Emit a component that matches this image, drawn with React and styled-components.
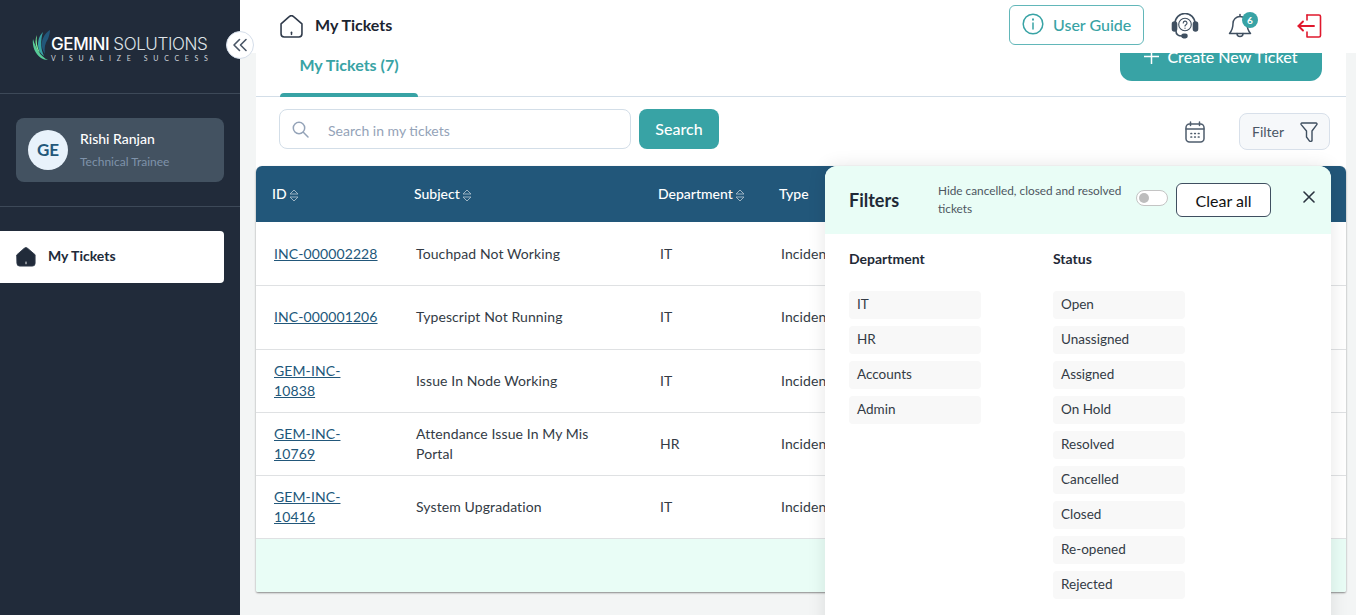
import React from 'react';
import styled, { createGlobalStyle } from 'styled-components';

const GlobalStyle = createGlobalStyle`
  * { box-sizing: border-box; }
  html, body { margin: 0; height: 100%; overflow: hidden; }
  body { font-family: Lato, "Open Sans", sans-serif; color: #1f2a37; }
`;

const Page = styled.div`
  display: flex;
  height: 100vh;
`;

const Sidebar = styled.aside`
  position: relative;
  flex: 0 0 240px;
  background: #212b3a;
  z-index: 3;
`;

const LogoArea = styled.div`
  height: 94px;
  border-bottom: 1px solid #3d4958;
  padding: 29px 0 0 32px;
  display: flex;
  align-items: flex-start;
`;

const LogoText = styled.div`
  margin-left: -1px;
  padding-top: 6px;
  color: #fff;
`;

const LogoName = styled.div`
  font-family: Inter, Lato, sans-serif;
  font-size: 17px;
  line-height: 19px;
  letter-spacing: -0.4px;
  font-weight: 500;
  white-space: nowrap;
  span { font-weight: 300; color: #dfe3e8; }
`;

const LogoTag = styled.div`
  font-size: 7px;
  line-height: 8px;
  letter-spacing: 5.7px;
  color: #cfd5dc;
  white-space: nowrap;
`;

const CollapseButton = styled.button`
  position: absolute;
  top: 31px;
  right: -14px;
  width: 28px;
  height: 28px;
  padding: 0;
  border-radius: 50%;
  border: 1px solid #d5deea;
  background: #fff;
  color: #4a5666;
  display: flex;
  align-items: center;
  justify-content: center;
`;

const ProfileArea = styled.div`
  padding: 24px 16px;
  border-bottom: 1px solid #3d4958;
`;

const ProfileCard = styled.div`
  height: 64px;
  border-radius: 8px;
  background: #435261;
  padding: 0 12px;
  display: flex;
  align-items: center;
  gap: 12px;
`;

const Avatar = styled.div`
  width: 40px;
  height: 40px;
  padding-bottom: 2px;
  border-radius: 50%;
  background: #e8f2fb;
  color: #22577a;
  font-size: 17px;
  font-weight: 700;
  display: flex;
  align-items: center;
  justify-content: center;
`;

const ProfileText = styled.div`
  display: flex;
  flex-direction: column;
  gap: 7px;
  margin-top: -2px;
`;

const ProfileName = styled.div`
  color: #fff;
  font-size: 14px;
  line-height: 17px;
  font-weight: 500;
`;

const ProfileRole = styled.div`
  color: #7f93aa;
  font-size: 12px;
  line-height: 15px;
`;

const NavList = styled.nav`
  padding: 24px 16px 0 0;
`;

const NavItem = styled.a`
  height: 52px;
  background: #fff;
  border-radius: 0 4px 4px 0;
  padding-left: 16px;
  display: flex;
  align-items: center;
  gap: 12px;
  color: #212b3a;
  font-size: 14px;
  font-weight: 700;
  span { margin-top: -3px; }
`;

const Main = styled.div`
  flex: 1;
  min-width: 0;
  display: flex;
  flex-direction: column;
`;

const TopBar = styled.header`
  flex: 0 0 53px;
  background: #fff;
  padding: 0 34px 0 40px;
  display: flex;
  align-items: center;
  position: relative;
  z-index: 2;
`;

const PageTitle = styled.div`
  margin: -4px 0 0 12px;
  font-size: 16px;
  font-weight: 700;
  color: #1b2430;
  flex: 1;
`;

const GuideButton = styled.button`
  width: 135px;
  height: 40px;
  margin-top: -3px;
  border: 1px solid #62b7b9;
  border-radius: 6px;
  background: #fff;
  color: #38a3a5;
  font: 500 16px Lato, sans-serif;
  padding: 0 0 2px 12px;
  display: flex;
  align-items: center;
  gap: 9px;
`;

const IconSlot = styled.div`
  position: relative;
  display: flex;
  margin-left: ${p => p.$gap}px;
  margin-top: -2px;
`;

const Badge = styled.span`
  position: absolute;
  top: -1px;
  right: -6px;
  width: 16px;
  height: 16px;
  border-radius: 50%;
  background: #38a3a5;
  color: #fff;
  font-size: 10px;
  font-weight: 700;
  display: flex;
  align-items: center;
  justify-content: center;
`;

const Body = styled.main`
  flex: 1;
  min-height: 0;
  overflow: hidden;
  background: #f3f5f5;
  padding: 0 10px 0 16px;
`;

const Sheet = styled.div`
  margin-top: -16px;
  background: #fff;
`;

const TabRow = styled.div`
  height: 60px;
  border-bottom: 1px solid #d3dee8;
  padding: 0 24px;
  display: flex;
  justify-content: space-between;
  align-items: flex-start;
`;

const Tab = styled.div`
  align-self: flex-end;
  width: 138px;
  display: flex;
  flex-direction: column;
  margin-bottom: -1px;
  color: #38a3a5;
  font-size: 16px;
  font-weight: 700;
  text-align: center;
`;

const TabBar = styled.div`
  height: 4px;
  margin-top: 19px;
  background: #38a3a5;
  border-radius: 4px 4px 0 0;
`;

const CreateButton = styled.button`
  width: 202px;
  height: 44px;
  border: 0;
  border-radius: 0 0 12px 12px;
  background: #38a3a5;
  color: #fff;
  font: 500 16px Lato, sans-serif;
  padding: 0 0 5px;
  display: flex;
  align-items: center;
  justify-content: center;
  gap: 8px;
`;

const Toolbar = styled.div`
  height: 69px;
  padding: 12px 16px 0 23px;
  display: flex;
  align-items: flex-start;
`;

const SearchBox = styled.div`
  width: 352px;
  height: 40px;
  border: 1px solid #d3dee8;
  border-radius: 8px;
  background: #fff;
  padding-left: 12px;
  display: flex;
  align-items: center;
  gap: 19px;
  color: #94a3b8;
  font-size: 14px;
  span { margin-top: 2px; }
`;

const SearchButton = styled.button`
  width: 80px;
  height: 40px;
  margin-left: 8px;
  border: 0;
  border-radius: 8px;
  background: #38a3a5;
  color: #fff;
  font: 500 16px Lato, sans-serif;
  padding: 0 0 2px;
`;

const CalendarSlot = styled.div`
  margin-left: auto;
  margin-right: 34px;
  padding-top: 12px;
  display: flex;
`;

const FilterButton = styled.button`
  width: 91px;
  height: 37px;
  margin-top: 4px;
  border: 1px solid #d8e0ea;
  border-radius: 8px;
  background: #f6f8fa;
  color: #4a5666;
  font: 400 14px Lato, sans-serif;
  padding: 0 11px 0 12px;
  display: flex;
  align-items: center;
  justify-content: space-between;
`;

const TableWrap = styled.div`
  position: relative;
`;

const Card = styled.div`
  border-radius: 6px 6px 2px 2px;
  overflow: hidden;
  box-shadow: 0 1px 2px rgba(0, 0, 0, 0.45);
`;

const Table = styled.table`
  width: 100%;
  table-layout: fixed;
  border-collapse: collapse;
  background: #fff;
`;

const HeadCell = styled.th`
  height: 56px;
  padding: 0 0 2px 16px;
  background: #22577a;
  color: #fff;
  font-size: 14px;
  font-weight: 500;
  text-align: left;
  white-space: nowrap;
  svg { margin-left: 2px; vertical-align: -3px; }
`;

const Row = styled.tr`
  height: 63px;
  border-bottom: 1px solid #dfe1e3;
  &:nth-child(2) { height: 64px; }
  &:first-child td { padding-top: 2px; }
`;

const Cell = styled.td`
  padding: 0 ${p => p.$right || 8}px 0 18px;
  font-size: 14px;
  line-height: 20px;
  letter-spacing: 0.1px;
  color: #333b45;
  overflow: hidden;
  white-space: ${p => p.$nowrap ? 'nowrap' : 'normal'};
`;

const TicketLink = styled.a`
  color: #22577a;
  text-decoration: underline;
`;

const TableFooter = styled.div`
  height: 53px;
  background: #e9fdf6;
`;

const Panel = styled.aside`
  position: absolute;
  top: 0;
  right: 15px;
  width: 506px;
  height: 500px;
  background: #fff;
  border-radius: 12px 12px 0 0;
  box-shadow: 0 0 18px rgba(0, 0, 0, 0.1);
`;

const PanelHead = styled.div`
  height: 68px;
  background: #e9fdf6;
  border-radius: 12px 12px 0 0;
  padding: 0 16px 0 24px;
  display: flex;
  align-items: center;
`;

const PanelTitle = styled.div`
  width: 89px;
  font-size: 18px;
  font-weight: 700;
  color: #1f2a37;
`;

const HideNote = styled.div`
  width: 198px;
  font-size: 11.8px;
  line-height: 18px;
  color: #4d5661;
`;

const Toggle = styled.div`
  width: 32px;
  height: 16px;
  margin-top: -4px;
  border: 1px solid #c4c4c4;
  border-radius: 8px;
  background: #fff;
  padding: 2px;
  &::before {
    content: '';
    display: block;
    width: 10px;
    height: 10px;
    border-radius: 50%;
    background: #bdbdbd;
  }
`;

const ClearButton = styled.button`
  width: 95px;
  height: 34px;
  margin: 0 0 0 8px;
  border: 1px solid #3f4f60;
  border-radius: 6px;
  background: #fff;
  color: #111;
  font: 400 16px Lato, sans-serif;
`;

const CloseButton = styled.button`
  margin: -6px 0 0 auto;
  padding: 0;
  border: 0;
  background: none;
  color: #2b3440;
  display: flex;
`;

const PanelBody = styled.div`
  padding: 16px 24px;
  display: flex;
`;

const FilterColumn = styled.div`
  width: 204px;
`;

const FilterHeading = styled.div`
  height: 41px;
  font-size: 14px;
  line-height: 18px;
  font-weight: 700;
  color: #1f2a37;
`;

const ChipList = styled.div`
  display: flex;
  flex-direction: column;
  gap: 7px;
`;

const Chip = styled.div`
  width: 132px;
  height: 28px;
  padding-left: 8px;
  border-radius: 4px;
  background: #f8f8f8;
  color: #333b45;
  font-size: 13.5px;
  line-height: 26px;
`;

const LeafIcon = () => (
  <svg width="20" height="32" viewBox="0 0 20 32" fill="none">
    <path d="M18 1C12 5 9 11 10 18c.5 3 2 5 3 7 -1-6 0-11 3-15 1-3 2-6 2-9z" fill="#22577a" />
    <path d="M11 3C6 8 5 15 7 21c1 3 3 5 5 6 -3-6-4-15-1-24z" fill="#38a3a5" />
    <path d="M1 10c-1 7 2 15 8 19 2 1 4 2 7 2 -7-3-12-11-15-21z" fill="#57cc99" />
    <path d="M5 6C3 10 3 15 5 20c1 2 2 3 3 4 -3-6-4-12-3-18z" fill="#80ed99" />
  </svg>
);

const ChevronsIcon = () => (
  <svg width="16" height="16" viewBox="0 0 16 16" fill="none" stroke="currentColor" strokeWidth="1.6" strokeLinecap="round" strokeLinejoin="round">
    <path d="M7.5 2.5 2 8l5.5 5.5" />
    <path d="M14 2.5 8.5 8l5.5 5.5" />
  </svg>
);

const HomeIcon = ({ size, solid }) => (
  <svg width={size} height={size} viewBox="0 0 22 22" fill={solid ? '#212b3a' : 'none'} stroke="#2f3a4a" strokeWidth={solid ? 1 : 1.5} strokeLinejoin="round" strokeLinecap="round">
    <path d="M1 8.5 8.8 1.6a3 3 0 0 1 4.2 0L21 8.5V18a3 3 0 0 1-3 3H4a3 3 0 0 1-3-3z" />
    <path d="M11 16.5v2" stroke={solid ? '#fff' : '#2f3a4a'} />
  </svg>
);

const InfoIcon = () => (
  <svg width="22" height="22" viewBox="0 0 22 22" fill="none" stroke="#38a3a5" strokeWidth="1.5" strokeLinecap="round">
    <circle cx="11" cy="11" r="9.8" />
    <path d="M11 10v6" />
    <path d="M11 6.3v.4" strokeWidth="1.9" />
  </svg>
);

const HeadsetIcon = () => (
  <svg width="28" height="26" viewBox="0 0 28 26" fill="none" stroke="#3f4f60" strokeWidth="1.6" strokeLinecap="round">
    <path d="M4 13V10.5a10 10 0 0 1 20 0V13" />
    <rect x="1.5" y="9" width="4" height="9" rx="2" fill="#3f4f60" />
    <rect x="22.5" y="9" width="4" height="9" rx="2" fill="#3f4f60" />
    <circle cx="14" cy="11.5" r="6.3" strokeWidth="1.1" />
    <path d="M12.2 10a1.9 1.9 0 1 1 2.8 1.7c-.7.4-1 .8-1 1.4" strokeWidth="1.1" />
    <path d="M14 15v.2" strokeWidth="1.2" />
    <path d="M5 18c0 3 2 5 6 5" />
    <rect x="11" y="21.4" width="5" height="3.2" rx="1.6" fill="#3f4f60" />
  </svg>
);

const BellIcon = () => (
  <svg width="24" height="26" viewBox="0 0 24 26" fill="none" stroke="#3f4f60" strokeWidth="1.5" strokeLinecap="round" strokeLinejoin="round">
    <path d="M12 3.5a7 7 0 0 0-7 7c0 5-1 7-3.5 10h21C20 17.5 19 15.5 19 10.5a7 7 0 0 0-7-7z" />
    <path d="M12 1.5v2" />
    <path d="M9 20.5a3 3 0 0 0 6 0" />
  </svg>
);

const LogoutIcon = () => (
  <svg width="25" height="24" viewBox="0 0 25 24" fill="none" stroke="#e0182d" strokeWidth="1.6" strokeLinecap="round" strokeLinejoin="round">
    <path d="M10 1h12a1.5 1.5 0 0 1 1.5 1.5v19A1.5 1.5 0 0 1 22 23H10v-5" />
    <path d="M10 1v5" />
    <path d="M1.5 12H17" strokeWidth="1.9" />
    <path d="M6 7.5 1.5 12 6 16.5" strokeWidth="1.9" />
  </svg>
);

const PlusIcon = () => (
  <svg width="15" height="15" viewBox="0 0 15 15" stroke="#fff" strokeWidth="1.5">
    <path d="M7.5 0v15M0 7.5h15" />
  </svg>
);

const SearchIcon = () => (
  <svg width="17" height="17" viewBox="0 0 17 17" fill="none" stroke="#94a3b8" strokeWidth="1.5" strokeLinecap="round">
    <circle cx="7" cy="7" r="5.7" />
    <path d="m11.3 11.3 4.7 4.7" />
  </svg>
);

const CalendarIcon = () => (
  <svg width="20" height="22" viewBox="0 0 20 22" fill="none" stroke="#4f5d6d" strokeWidth="1.5" strokeLinecap="round">
    <rect x="1" y="3" width="18" height="18" rx="3.5" />
    <path d="M1 8h18M5.5 1v3.5M14.5 1v3.5" />
    <path d="M6 12.5h.6M9.7 12.5h.6M13.4 12.5h.6M6 16h.6M9.7 16h.6M13.4 16h.6" strokeWidth="1.7" />
  </svg>
);

const FunnelIcon = () => (
  <svg width="18" height="20" viewBox="0 0 18 20" fill="none" stroke="#3f4f60" strokeWidth="1.4" strokeLinejoin="round">
    <path d="M2 1h14a1 1 0 0 1 .8 1.6L12 9v8.5a1.5 1.5 0 0 1-3 .8L6.5 15V9L1.2 2.6A1 1 0 0 1 2 1z" />
  </svg>
);

const SortIcon = () => (
  <svg width="10" height="13" viewBox="0 0 10 13" fill="none" stroke="#a9bccb" strokeWidth="0.9" strokeLinejoin="round">
    <path d="M1 5 5 1l4 4z" />
    <path d="M1 8h8L5 12z" />
  </svg>
);

const CloseIcon = () => (
  <svg width="12" height="12" viewBox="0 0 12 12" stroke="currentColor" strokeWidth="1.6" strokeLinecap="round">
    <path d="M1 1l10 10M11 1 1 11" />
  </svg>
);

const tickets = [
  { id: 'INC-000002228', subject: 'Touchpad Not Working', dept: 'IT' },
  { id: 'INC-000001206', subject: 'Typescript Not Running', dept: 'IT' },
  { id: 'GEM-INC-10838', subject: 'Issue In Node Working', dept: 'IT' },
  { id: 'GEM-INC-10769', subject: 'Attendance Issue In My Mis Portal', dept: 'HR' },
  { id: 'GEM-INC-10416', subject: 'System Upgradation', dept: 'IT' },
];

const departments = ['IT', 'HR', 'Accounts', 'Admin'];
const statuses = ['Open', 'Unassigned', 'Assigned', 'On Hold', 'Resolved', 'Cancelled', 'Closed', 'Re-opened', 'Rejected'];

const App = () => (
  <Page>
    <GlobalStyle />
    <Sidebar>
      <LogoArea>
        <LeafIcon />
        <LogoText>
          <LogoName>GEMINI <span>SOLUTIONS</span></LogoName>
          <LogoTag>VISUALIZE SUCCESS</LogoTag>
        </LogoText>
      </LogoArea>
      <CollapseButton aria-label="Collapse"><ChevronsIcon /></CollapseButton>
      <ProfileArea>
        <ProfileCard>
          <Avatar>GE</Avatar>
          <ProfileText>
            <ProfileName>Rishi Ranjan</ProfileName>
            <ProfileRole>Technical Trainee</ProfileRole>
          </ProfileText>
        </ProfileCard>
      </ProfileArea>
      <NavList>
        <NavItem><HomeIcon size={20} solid /><span>My Tickets</span></NavItem>
      </NavList>
    </Sidebar>
    <Main>
      <TopBar>
        <HomeIcon size={23} />
        <PageTitle>My Tickets</PageTitle>
        <GuideButton><InfoIcon />User Guide</GuideButton>
        <IconSlot $gap={27}><HeadsetIcon /></IconSlot>
        <IconSlot $gap={29}><BellIcon /><Badge>6</Badge></IconSlot>
        <IconSlot $gap={45}><LogoutIcon /></IconSlot>
      </TopBar>
      <Body>
        <Sheet>
          <TabRow>
            <Tab>
              My Tickets (7)
              <TabBar />
            </Tab>
            <CreateButton><PlusIcon />Create New Ticket</CreateButton>
          </TabRow>
          <Toolbar>
            <SearchBox><SearchIcon /><span>Search in my tickets</span></SearchBox>
            <SearchButton>Search</SearchButton>
            <CalendarSlot><CalendarIcon /></CalendarSlot>
            <FilterButton>Filter<FunnelIcon /></FilterButton>
          </Toolbar>
          <TableWrap>
            <Card>
              <Table>
                <colgroup>
                  <col width="142" />
                  <col width="244" />
                  <col width="121" />
                  <col width="110" />
                  <col />
                </colgroup>
                <thead>
                  <tr>
                    <HeadCell>ID<SortIcon /></HeadCell>
                    <HeadCell>Subject<SortIcon /></HeadCell>
                    <HeadCell>Department<SortIcon /></HeadCell>
                    <HeadCell>Type</HeadCell>
                    <HeadCell />
                  </tr>
                </thead>
                <tbody>
                  {tickets.map(t => (
                    <Row key={t.id}>
                      <Cell $right={19}><TicketLink>{t.id}</TicketLink></Cell>
                      <Cell $right={40}>{t.subject}</Cell>
                      <Cell>{t.dept}</Cell>
                      <Cell $nowrap>Incident</Cell>
                      <Cell />
                    </Row>
                  ))}
                </tbody>
              </Table>
              <TableFooter />
            </Card>
            <Panel>
              <PanelHead>
                <PanelTitle>Filters</PanelTitle>
                <HideNote>Hide cancelled, closed and resolved tickets</HideNote>
                <Toggle />
                <ClearButton>Clear all</ClearButton>
                <CloseButton aria-label="Close"><CloseIcon /></CloseButton>
              </PanelHead>
              <PanelBody>
                <FilterColumn>
                  <FilterHeading>Department</FilterHeading>
                  <ChipList>{departments.map(d => <Chip key={d}>{d}</Chip>)}</ChipList>
                </FilterColumn>
                <FilterColumn>
                  <FilterHeading>Status</FilterHeading>
                  <ChipList>{statuses.map(s => <Chip key={s}>{s}</Chip>)}</ChipList>
                </FilterColumn>
              </PanelBody>
            </Panel>
          </TableWrap>
        </Sheet>
      </Body>
    </Main>
  </Page>
);

export default App;
